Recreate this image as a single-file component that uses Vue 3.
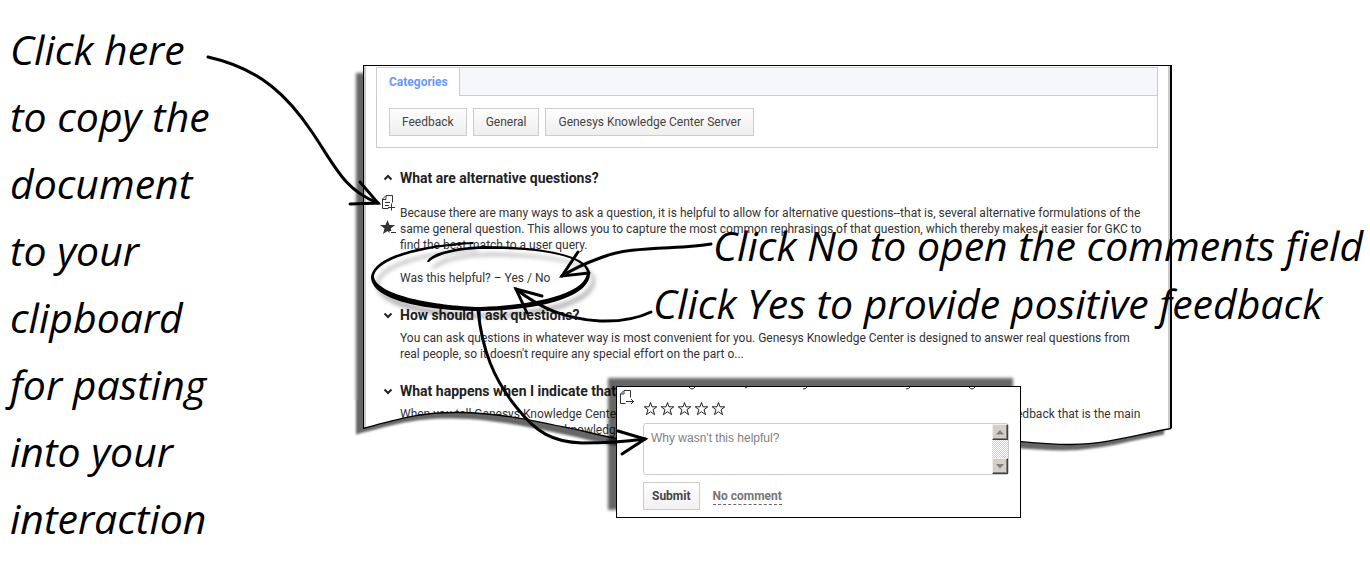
<template>
    <main class="guide">
        <!-- Handwritten note on the left -->
        <p class="note note-copy">
            <span v-for="line in copyNote" :key="line">{{ line }}</span>
        </p>

        <!-- Knowledge center page -->
        <section class="sheet">
            <div class="categories">
                <div class="tab-bar">
                    <a class="tab" href="#categories">Categories</a>
                </div>
                <div id="categories" class="category-list">
                    <button v-for="name in categories" :key="name" type="button" class="category">{{ name }}</button>
                </div>
            </div>

            <article v-for="item in questions" :key="item.title" class="question" :class="{ open: item.open }">
                <div class="gutter">
                    <svg class="chevron" viewBox="0 0 10 16">
                        <path :d="item.open ? 'M1.5 9.5 5 6l3.500 3.500' : 'M1.500 6.500 5 10l3.500-3.500'" />
                    </svg>
                    <template v-if="item.open">
                        <button type="button" class="icon-button" aria-label="Copy document">
                            <svg viewBox="0 0 16 17">
                                <path class="line" d="M8.500 14.500H2.500V5L6 1.500h6.500v7M6 2v3.500H3M5 8.500h5M5 11.500h4M11.500 9.500v7M8 13.500h7" />
                            </svg>
                        </button>
                        <button type="button" class="icon-button" aria-label="Remove from favorites">
                            <svg viewBox="0 0 16 17">
                                <path class="solid" d="M7.500 1l2 5h5.500l-4.300 3.500.8 2.500H9.500v2L7.500 12 3 15l1.500-5.500L0 6h5.500zM11 13h5v1h-5z" />
                            </svg>
                        </button>
                    </template>
                </div>
                <div class="content">
                    <h3>{{ item.title }}</h3>
                    <p>{{ item.text }}</p>
                    <p v-if="item.open" class="helpful">
                        Was this helpful? – <a href="#yes">Yes</a> / <a href="#no">No</a>
                    </p>
                </div>
            </article>

            <!-- Torn bottom edge -->
            <svg class="torn-edge" viewBox="0 0 824 64" preserveAspectRatio="none">
                <defs>
                    <clipPath id="below">
                        <path :d="edge + 'H824V64H0V0H14Z'" />
                    </clipPath>
                    <filter id="soft" x="-5%" y="-30%" width="110%" height="160%">
                        <feGaussianBlur stdDeviation="1.2" />
                    </filter>
                </defs>
                <g clip-path="url(#below)">
                    <path fill="#fff" d="M0 0h824v64H0z" />
                    <path :d="edge + 'V-20H14Z'" fill="#666" filter="url(#soft)" transform="translate(-7 6)" />
                </g>
                <path :d="edge" fill="none" stroke="#000" stroke-width="1.300" />
            </svg>
        </section>

        <!-- Comment form opened by the "No" link -->
        <form class="comment" @submit.prevent>
            <svg class="cut-text" viewBox="0 0 300 4">
                <path d="M1 0q3 4 6 0M57 1l2-1M115 2q3 0 4-2M218 2q3 0 4-2M281 0q3 4 6 0" />
            </svg>
            <svg class="doc-icon" viewBox="0 0 16 17">
                <path class="line" d="M6.500 14.500H1.500V5L5 1.500h6.500v7M5 2v3H2M7 12.500h7.500M12 10l2.500 2.500L12 15" />
            </svg>
            <div class="stars">
                <button v-for="n in 5" :key="n" type="button" class="star" :aria-label="`Rate ${n}`">
                    <svg viewBox="0 0 15 15">
                        <path d="M7.500 1.500 9 5.800h4.800L10 8.700l1.600 5L7.500 10.700 3.400 13.700 5 8.700 1.200 5.800H6z" />
                    </svg>
                </button>
            </div>
            <div class="field">
                <textarea v-model="comment" aria-label="Comment" placeholder="Why wasn't this helpful?"></textarea>
                <div class="scrollbar">
                    <button type="button" class="scroll-button" aria-label="Scroll up">
                        <svg viewBox="0 0 8 5"><path d="M4 0l4 4.500H0z" /></svg>
                    </button>
                    <button type="button" class="scroll-button" aria-label="Scroll down">
                        <svg viewBox="0 0 8 5"><path d="M4 4.500L0 0h8z" /></svg>
                    </button>
                </div>
            </div>
            <div class="actions">
                <button type="submit" class="submit">Submit</button>
                <a href="#skip" class="skip">No comment</a>
            </div>
        </form>

        <!-- Arrows and hand-drawn circle -->
        <svg class="arrows" width="1370" height="565" viewBox="0 0 1370 565">
            <defs>
                <filter id="drop" x="-10%" y="-10%" width="130%" height="140%">
                    <feDropShadow dx="5" dy="7" stdDeviation="2" flood-color="#000" flood-opacity="0.3" />
                </filter>
            </defs>
            <g filter="url(#drop)">
                <path class="ink" d="M473 242C432 244 373 253 371 278C373 302 433 311 481 311C540 310 592 297 590 272C586 253 535 246 484 246C458 247 430 252 427 262L429 262C439 253 462 249 484 249C535 248 584 255 587 272C587 293 537 305 481 307C434 306 377 295 374 277C376 257 432 246 473 244Z" />
            </g>
            <g class="strokes">
                <path d="M208 57C262 69 289 98 312 132S344 190 378 203" />
                <path d="M360 182L378 203L350 204" />
                <path d="M711 244C680 250 630 245 600 258Q578 266 562 276" />
                <path d="M578 252L562 276L589 273" />
                <path d="M651 312Q630 322 600 321C565 319 540 308 516 289" />
                <path d="M542 296L516 289L527 313" />
                <path d="M478 310C482 350 494 380 517 408C536 432 552 442 582 443Q615 443 645 439" />
                <path d="M618 431L645 439L622 454" />
            </g>
        </svg>

        <p class="note note-no">Click No to open the comments field</p>
        <p class="note note-yes">Click Yes to provide positive feedback</p>
    </main>
</template>

<script setup>
import { ref } from 'vue';

const comment = ref('');

const copyNote = [
    'Click here',
    'to copy the',
    'document',
    'to your',
    'clipboard',
    'for pasting',
    'into your',
    'interaction'
];

const categories = ['Feedback', 'General', 'Genesys Knowledge Center Server'];

const questions = [
    {
        title: 'What are alternative questions?',
        text: 'Because there are many ways to ask a question, it is helpful to allow for alternative questions--that is, several alternative formulations of the same general question. This allows you to capture the most common rephrasings of that question, which thereby makes it easier for GKC to find the best match to a user query.',
        open: true
    },
    {
        title: 'How should I ask questions?',
        text: "You can ask questions in whatever way is most convenient for you. Genesys Knowledge Center is designed to answer real questions from real people, so it doesn't require any special effort on the part o...",
        open: false
    },
    {
        title: 'What happens when I indicate that',
        text: 'When you tell Genesys Knowledge Center that an answer was helpful or not helpful to you, it provides some of the feedback that is the main way to learn how useful are its knowledge',
        open: false
    }
];

// Outline of the torn paper, from the left border to the right one
const edge = 'M14 28.500C50 19 72 12 110 12.500C155 13 190 22 234 31C330 56 400 46 500 36S650 44 722 44.500C760 44 790 34 822 28.500';
</script>

<style>
body {
    margin: 0;
    background: #fff;
}
</style>

<style scoped>
.guide {
    position: relative;
    display: grid;
    grid-template-columns: 363px 1fr 198px;
    align-items: start;
    overflow: hidden;
    font-family: Roboto, sans-serif;
    font-size: 12px;
    line-height: 16px;
    color: #333;
}

/* Handwritten notes */
.note {
    margin: 0;
    font-family: "Segoe Print", "Open Sans", sans-serif;
    font-size: 41px;
    font-style: italic;
    line-height: 67px;
    color: #000;
    white-space: nowrap;
}

.note-copy {
    display: flex;
    flex-direction: column;
    padding: 16px 0 13px 10px;
}

.note-no,
.note-yes {
    position: absolute;
    left: 713px;
    top: 212px;
}

.note-yes {
    left: 653px;
    top: 270px;
}

/* Page */
.sheet {
    position: relative;
    margin-top: 65px;
    padding: 1px 10px 10px 10px;
    border: 1px solid #000;
    border-right-width: 2px;
    box-shadow: inset 2px 0 #ccc, inset -2px 0 #ccc, -7px 8px 3px #666;
}

.categories {
    margin: 0 2px 22px;
    border: 1px solid #ccc;
}

.tab-bar {
    display: flex;
    background: #f6f7fa;
    box-shadow: inset 0 -1px #ccc;
}

.tab {
    padding: 6px 11px 6px 12px;
    border-right: 1px solid #ccc;
    background: #fff;
    color: #69f;
    font-weight: 700;
    text-decoration: none;
}

.category-list {
    display: flex;
    gap: 6px;
    padding: 12px 12px 11px;
}

.category {
    padding: 6px 12px 5px;
    border: 1px solid #ccc;
    background: linear-gradient(#fdfdfd, #eee);
    color: #444;
    font: inherit;
    line-height: 15px;
}

.question {
    display: flex;
    margin: 0 2px 21px;
}

.gutter {
    display: flex;
    flex-direction: column;
    align-items: center;
    width: 24px;
}

.chevron {
    width: 10px;
    height: 16px;
    fill: none;
    stroke: #222;
    stroke-width: 2;
}

.icon-button {
    margin: 8px 0 0;
    padding: 0;
    border: 0;
    background: none;
    line-height: 0;
}

.icon-button svg {
    width: 16px;
    height: 17px;
}

.line {
    fill: none;
    stroke: #333;
    stroke-width: 1;
}

.solid {
    fill: #333;
}

.content {
    flex: 1;
    padding-right: 8px;
}

h3 {
    margin: 0 0 7px;
    font-size: 14px;
    line-height: 16px;
    color: #222;
}

.open h3 {
    margin-bottom: 19px;
}

.content p {
    margin: 0;
}

.content .helpful {
    margin-top: 17px;
}

.helpful a {
    color: inherit;
    text-decoration: none;
}

.question:nth-last-of-type(1) {
    margin-bottom: 0;
}

.torn-edge {
    position: absolute;
    left: -15px;
    bottom: -16px;
    width: calc(100% + 18px);
    height: 64px;
}

/* Comment form */
.comment {
    position: absolute;
    left: 616px;
    top: 386px;
    width: 366px;
    padding: 14px 11px 7px 26px;
    border: 1px solid #000;
    background: #fff;
    box-shadow: -8px -8px 3px rgba(0, 0, 0, 0.6);
}

.cut-text {
    position: absolute;
    left: 71px;
    top: 0;
    width: 300px;
    height: 4px;
    fill: none;
    stroke: #222;
    stroke-width: 1;
}

.doc-icon {
    position: absolute;
    left: 2px;
    top: 2px;
    width: 16px;
    height: 17px;
}

.stars {
    display: flex;
    gap: 2px;
}

.star {
    width: 15px;
    height: 15px;
    padding: 0;
    border: 0;
    background: none;
    line-height: 0;
}

.star svg {
    width: 15px;
    height: 15px;
    fill: none;
    stroke: #222;
    stroke-width: 1;
}

.field {
    display: flex;
    margin: 7px 0;
    height: 50px;
    border: 1px solid #ccc;
    border-radius: 3px;
}

textarea {
    flex: 1;
    min-width: 0;
    padding: 6px 7px;
    border: 0;
    background: none;
    outline: 0;
    resize: none;
    overflow: hidden;
    font: 12px/16px "Liberation Sans", Arial, sans-serif;
}

textarea::placeholder {
    color: #808080;
}

.scrollbar {
    display: flex;
    flex-direction: column;
    justify-content: space-between;
    width: 16px;
    background: repeating-conic-gradient(#d4d0c8 0 25%, #fff 0 50%) 0 0 / 2px 2px;
}

.scroll-button {
    display: flex;
    align-items: center;
    justify-content: center;
    height: 16px;
    padding: 0;
    border: 1px solid;
    border-color: #eee #404040 #404040 #eee;
    background: #d4d0c8;
    box-shadow: inset -1px -1px #808080;
}

.scroll-button svg {
    width: 8px;
    height: 5px;
    fill: #808080;
}

.actions {
    display: flex;
    align-items: center;
    gap: 13px;
}

.submit {
    padding: 6px 8px 5px;
    border: 1px solid #ccc;
    background: linear-gradient(#fff, #f3eff3);
    color: #444;
    font: inherit;
    font-weight: 700;
    line-height: 15px;
}

.skip {
    border-bottom: 1px dashed #666;
    color: #777;
    font-weight: 700;
    line-height: 16px;
    text-decoration: none;
}

/* Drawing over the page */
.arrows {
    position: absolute;
    left: 0;
    top: 0;
    pointer-events: none;
}

.ink {
    fill: #000;
}

.strokes {
    fill: none;
    stroke: #000;
    stroke-width: 3;
    stroke-linecap: round;
}
</style>
